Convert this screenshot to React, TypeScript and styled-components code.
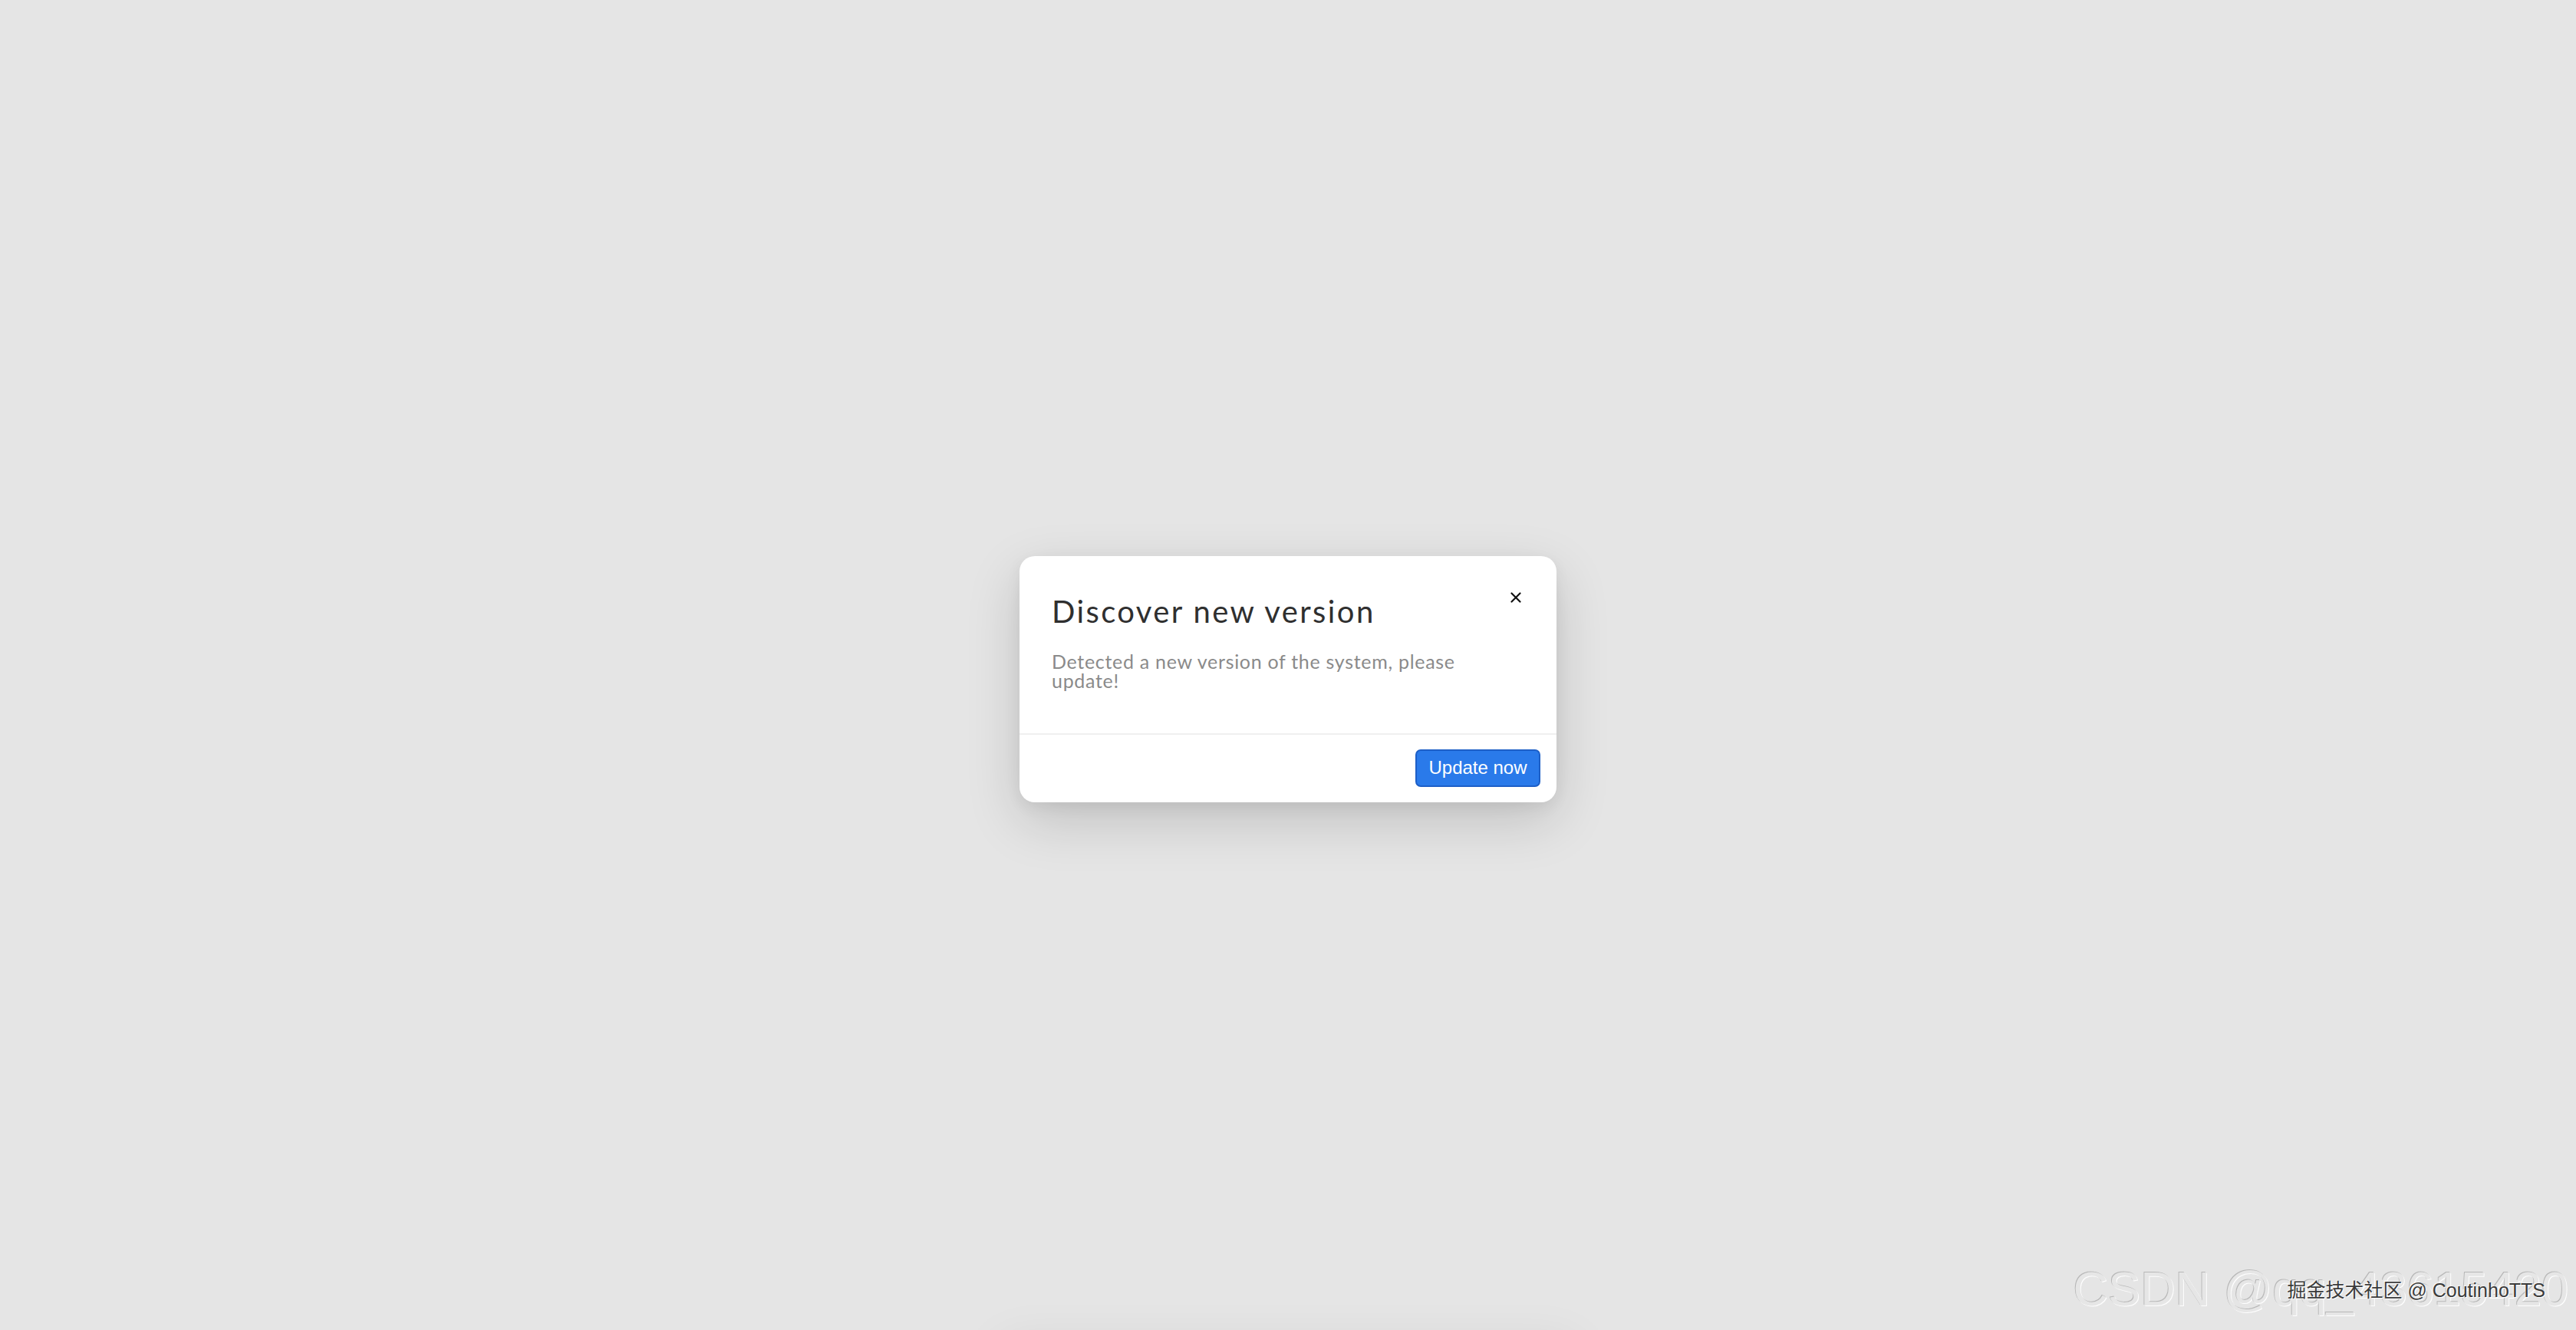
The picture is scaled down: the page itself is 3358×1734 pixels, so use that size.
import React from 'react';
import styled, { createGlobalStyle } from 'styled-components';

const GlobalStyle = createGlobalStyle`
  html, body {
    margin: 0;
    padding: 0;
    background: #e5e5e5;
    overflow: hidden;
  }
`;

const CloseIcon = () => (
  <svg width="14" height="14" viewBox="0 0 14 14">
    <path d="M1.5 1.5 L12.5 12.5 M12.5 1.5 L1.5 12.5" stroke="#111" strokeWidth="2.2" strokeLinecap="round" />
  </svg>
);

const App = () => {
  return (
    <Page>
      <GlobalStyle />
      <Modal>
        <Header>
          <Title>Discover new version</Title>
          <Description>Detected a new version of the system, please update!</Description>
          <CloseButton aria-label="close">
            <CloseIcon />
          </CloseButton>
        </Header>
        <Footer>
          <UpdateButton>Update now</UpdateButton>
        </Footer>
      </Modal>
      <GhostShadow />
      <Watermark>
        <WatermarkBig>CSDN @qq_43615420</WatermarkBig>
        <WatermarkSmall>掘金技术社区 @ CoutinhoTTS</WatermarkSmall>
      </Watermark>
    </Page>
  );
};

const Page = styled.div`
  position: relative;
  width: 100vw;
  height: 100vh;
  box-sizing: border-box;
  padding-top: 36px;
  display: flex;
  align-items: center;
  justify-content: center;
  background: #e5e5e5;
  overflow: hidden;
`;

const Modal = styled.div`
  position: relative;
  width: 700px;
  background: #ffffff;
  border-radius: 20px;
  box-shadow: 0 24px 70px rgba(0, 0, 0, 0.16), 0 6px 20px rgba(0, 0, 0, 0.06);
  overflow: hidden;
  display: flex;
  flex-direction: column;
`;

const Header = styled.div`
  padding: 52px 42px 56px;
  border-bottom: 2px solid #f0f0f0;
`;

const Title = styled.h2`
  margin: 0 0 33px;
  font-family: Lato, "Open Sans", sans-serif;
  font-weight: 400;
  font-size: 40px;
  line-height: 40px;
  letter-spacing: 2.4px;
  color: #2f2f2f;
`;

const Description = styled.p`
  margin: 0;
  max-width: 590px;
  font-family: Lato, "Open Sans", sans-serif;
  font-weight: 400;
  font-size: 25px;
  line-height: 25px;
  letter-spacing: 0.7px;
  color: #8a8a8a;
`;

const CloseButton = styled.button`
  position: absolute;
  top: 46px;
  right: 45px;
  width: 16px;
  height: 16px;
  padding: 0;
  border: none;
  background: transparent;
  display: flex;
  align-items: center;
  justify-content: center;
  cursor: pointer;
`;

const Footer = styled.div`
  display: flex;
  justify-content: flex-end;
  padding: 19px 21px 20px;
`;

const UpdateButton = styled.button`
  width: 163px;
  height: 49px;
  box-sizing: border-box;
  border: 2px solid #1d5fc7;
  border-radius: 7px;
  background: #2a7aea;
  color: #ffffff;
  font-family: "Liberation Sans", Arial, sans-serif;
  font-size: 24px;
  padding: 0;
  cursor: pointer;
`;

const GhostShadow = styled.div`
  position: absolute;
  left: 50%;
  bottom: -330px;
  width: 760px;
  height: 320px;
  margin-left: -380px;
  border-radius: 20px;
  box-shadow: 0 0 60px rgba(0, 0, 0, 0.06);
`;

const Watermark = styled.div`
  position: absolute;
  right: 10px;
  bottom: 22px;
  display: flex;
  align-items: center;
  justify-content: center;
  pointer-events: none;
`;

const WatermarkBig = styled.span`
  font-family: "Liberation Sans", Arial, sans-serif;
  font-size: 63px;
  line-height: 64px;
  color: #e6e6e6;
  text-shadow: -1px -1px 0 rgba(0, 0, 0, 0.2), 1px 1px 0 rgba(255, 255, 255, 0.95);
  white-space: nowrap;
`;

const WatermarkSmall = styled.span`
  position: absolute;
  right: 30px;
  top: 20px;
  font-family: "Liberation Sans", "Noto Sans CJK SC", sans-serif;
  font-size: 25px;
  line-height: 28px;
  color: #3a3a3a;
  text-shadow: 1px 1px 0 #ffffff, -1px -1px 0 rgba(255, 255, 255, 0.7);
  white-space: nowrap;
`;

export default App;
